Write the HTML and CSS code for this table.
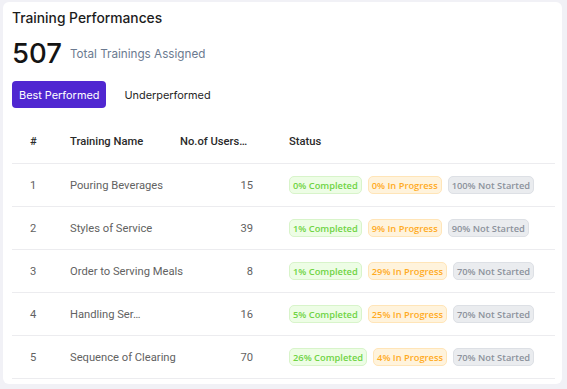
FILE: index.html
```
<!DOCTYPE html>
<html>
<head>
<meta charset="utf-8">
<link rel="stylesheet" href="styles.css">
</head>
<body>
<div class="card">
  <div class="title">Training Performances</div>
  <div class="total">
    <span class="total-num">507</span>
    <span class="total-label">Total Trainings Assigned</span>
  </div>
  <div class="tabs">
    <button class="tab tab-active">Best Performed</button>
    <button class="tab">Underperformed</button>
  </div>
  <table class="grid">
    <colgroup>
      <col class="c-idx"><col class="c-name"><col class="c-users"><col>
    </colgroup>
    <thead>
      <tr><th class="idx">#</th><th>Training Name</th><th>No.of Users…</th><th>Status</th></tr>
    </thead>
    <tbody>
      <tr><td class="idx">1</td><td>Pouring Beverages</td><td class="num">15</td>
        <td><div class="tags"><span class="tag green">0% Completed</span><span class="tag orange">0% In Progress</span><span class="tag gray">100% Not Started</span></div></td></tr>
      <tr><td class="idx">2</td><td>Styles of Service</td><td class="num">39</td>
        <td><div class="tags"><span class="tag green">1% Completed</span><span class="tag orange">9% In Progress</span><span class="tag gray">90% Not Started</span></div></td></tr>
      <tr><td class="idx">3</td><td>Order to Serving Meals</td><td class="num">8</td>
        <td><div class="tags"><span class="tag green">1% Completed</span><span class="tag orange">29% In Progress</span><span class="tag gray">70% Not Started</span></div></td></tr>
      <tr><td class="idx">4</td><td>Handling Ser…</td><td class="num">16</td>
        <td><div class="tags"><span class="tag green">5% Completed</span><span class="tag orange">25% In Progress</span><span class="tag gray">70% Not Started</span></div></td></tr>
      <tr><td class="idx">5</td><td>Sequence of Clearing</td><td class="num">70</td>
        <td><div class="tags"><span class="tag green">26% Completed</span><span class="tag orange">4% In Progress</span><span class="tag gray">70% Not Started</span></div></td></tr>
    </tbody>
  </table>
</div>
</body>
</html>
```
FILE: styles.css
```
html, body {
  margin: 0;
  padding: 0;
  background: #f1f1f6;
}
body {
  padding: 2px 0 0 3px;
  font-family: Inter, "Liberation Sans", sans-serif;
}
.card {
  width: 559px;
  height: 382px;
  box-sizing: border-box;
  background: #ffffff;
  border-radius: 6px;
  padding: 6px 7px 0 9px;
}
.title {
  font-size: 13.8px;
  line-height: 20px;
  font-weight: 500;
  color: #1c1c1c;
}
.total {
  display: flex;
  align-items: center;
  gap: 8px;
  margin-top: 7px;
  height: 35px;
}
.total-num {
  font-size: 27.5px;
  line-height: 34px;
  font-weight: 500;
  color: #141414;
}
.total-label {
  font-size: 11.7px;
  color: #6b7a90;
  margin-top: 2px;
}
.tabs {
  display: flex;
  gap: 4px;
  margin-top: 11px;
}
.tab {
  font-family: Inter, "Liberation Sans", sans-serif;
  font-size: 10.9px;
  height: 27px;
  padding: 0 7px;
  border: none;
  border-radius: 4px;
  background: transparent;
  color: #1f1f1f;
}
.tab-active {
  background: #5027d1;
  color: #ffffff;
  margin-right: 7px;
}
.grid {
  margin-top: 12px;
  width: 543px;
  border-collapse: collapse;
  table-layout: fixed;
  font-family: Roboto, "Liberation Sans", sans-serif;
  font-size: 11.2px;
}
.c-idx { width: 58px; }
.c-name { width: 110px; }
.c-users { width: 109px; }
.grid th {
  height: 43px;
  padding: 0;
  text-align: left;
  font-weight: 500;
  color: #2a2a2a;
  border-bottom: 1px solid #ececef;
  white-space: nowrap;
}
.grid td {
  height: 42px;
  padding: 0;
  color: #626262;
  border-bottom: 1px solid #ececef;
  white-space: nowrap;
}
.grid .idx {
  padding-left: 18px;
}
.grid td.num {
  text-align: right;
  padding-right: 36px;
}
.tags {
  display: flex;
  gap: 6px;
}
.tag {
  display: inline-flex;
  align-items: center;
  height: 18px;
  box-sizing: border-box;
  padding: 0 3px;
  border: 1px solid;
  border-radius: 5px;
  font-family: "Open Sans", "Noto Sans", sans-serif;
  font-size: 9.3px;
  font-weight: 600;
}
.green {
  color: #6fd444;
  background: #edfde5;
  border-color: #d8f4ca;
}
.orange {
  color: #ffab1f;
  background: #fff3dc;
  border-color: #ffe5b8;
}
.gray {
  color: #8c929c;
  background: #eaecef;
  border-color: #dde0e5;
}
```
